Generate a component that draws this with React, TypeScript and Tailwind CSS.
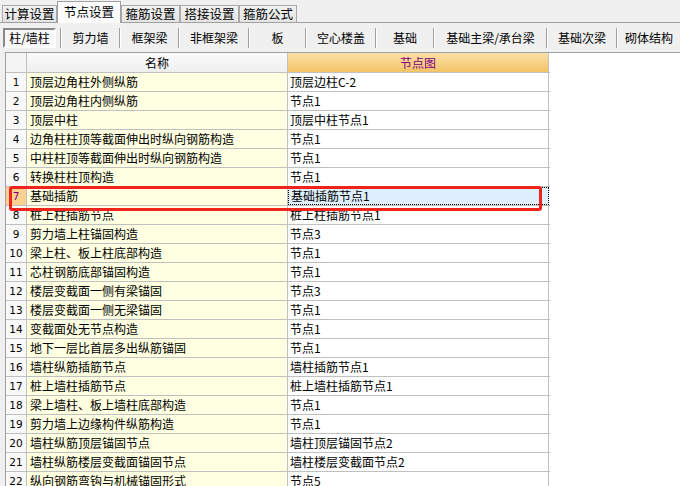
import React from "react";

const rows: [string, string][] = [
  ["顶层边角柱外侧纵筋", "顶层边柱C-2"],
  ["顶层边角柱内侧纵筋", "节点1"],
  ["顶层中柱", "顶层中柱节点1"],
  ["边角柱柱顶等截面伸出时纵向钢筋构造", "节点1"],
  ["中柱柱顶等截面伸出时纵向钢筋构造", "节点1"],
  ["转换柱柱顶构造", "节点1"],
  ["基础插筋", "基础插筋节点1"],
  ["桩上柱插筋节点", "桩上柱插筋节点1"],
  ["剪力墙上柱锚固构造", "节点3"],
  ["梁上柱、板上柱底部构造", "节点1"],
  ["芯柱钢筋底部锚固构造", "节点1"],
  ["楼层变截面一侧有梁锚固", "节点3"],
  ["楼层变截面一侧无梁锚固", "节点1"],
  ["变截面处无节点构造", "节点1"],
  ["地下一层比首层多出纵筋锚固", "节点1"],
  ["墙柱纵筋插筋节点", "墙柱插筋节点1"],
  ["桩上墙柱插筋节点", "桩上墙柱插筋节点1"],
  ["梁上墙柱、板上墙柱底部构造", "节点1"],
  ["剪力墙上边缘构件纵筋构造", "节点1"],
  ["墙柱纵筋顶层锚固节点", "墙柱顶层锚固节点2"],
  ["墙柱纵筋楼层变截面锚固节点", "墙柱楼层变截面节点2"],
  ["纵向钢筋弯钩与机械锚固形式", "节点5"],
];

const tabs = [
  { label: "计算设置", w: "w-[55px]" },
  { label: "节点设置", w: "w-[64px]", active: true },
  { label: "箍筋设置", w: "w-[59px]" },
  { label: "搭接设置", w: "w-[59px]" },
  { label: "箍筋公式", w: "w-[58px]" },
];

const buttons = [
  { label: "剪力墙", w: "w-[57px]" },
  { label: "框架梁", w: "w-[57px]" },
  { label: "非框架梁", w: "w-[68px]" },
  { label: "板", w: "w-[55px]" },
  { label: "空心楼盖", w: "w-[68px]" },
  { label: "基础", w: "w-[56px]" },
  { label: "基础主梁/承台梁", w: "w-[111px]" },
  { label: "基础次梁", w: "w-[68px]" },
  { label: "砌体结构", w: "w-[62px]" },
];

const Sep = () => (
  <div className="h-[20px] w-[2px] shrink-0 border-l border-r border-l-[#a0a0a0] border-r-white" />
);

export default function App() {
  return (
    <div className="relative h-[486px] w-[680px] overflow-hidden bg-[#f0f0f0] font-['Noto_Sans_CJK_SC',sans-serif] text-[12px] text-black">
      {/* top tabs */}
      <div className="flex h-[23px] items-end border-b border-[#a0a0a0] pl-[2px]">
        {tabs.map((t) =>
          t.active ? (
            <div
              key={t.label}
              className={`${t.w} relative -mb-px flex h-[22px] items-center justify-center border border-b-0 border-[#a0a0a0] bg-[#fcfcfc] text-[12.5px] leading-none`}
            >
              {t.label}
            </div>
          ) : (
            <div
              key={t.label}
              className={`${t.w} flex h-[17px] items-center justify-center border border-b-0 border-[#a9a9a9] bg-gradient-to-b from-[#f2f2f2] to-[#e4e4e4] text-[12.5px] leading-none`}
            >
              {t.label}
            </div>
          )
        )}
      </div>

      {/* toolbar */}
      <div className="flex h-[29px] items-center pl-[3px] pt-[1px]">
        <div className="flex h-[20px] w-[53px] items-center justify-center border-2 border-b-white border-l-[#8a8a8a] border-r-white border-t-[#8a8a8a] bg-[#f8f8f8] leading-none">
          柱/墙柱
        </div>
        <div className="w-[4px]" />
        {buttons.map((b) => (
          <React.Fragment key={b.label}>
            <Sep />
            <div className={`${b.w} flex h-[20px] shrink-0 items-center justify-center leading-none`}>
              {b.label}
            </div>
          </React.Fragment>
        ))}
      </div>

      {/* grid area */}
      <div className="ml-[5px] h-full border-l border-t border-[#a0a0a0] bg-white">
        <div className="w-[544px]">
          <div className="flex h-[20px] border-b border-[#c0c0c0]">
            <div className="w-[21px] shrink-0 border-r border-[#c0c0c0] bg-[#f4f4f4]" />
            <div className="flex w-[261px] shrink-0 items-center justify-center border-r border-[#c0c0c0] bg-gradient-to-b from-[#fbfbfb] to-[#efefef] leading-none">
              名称
            </div>
            <div className="flex w-[261px] shrink-0 items-center justify-center border-r border-[#c0c0c0] bg-gradient-to-b from-[#fbe0a6] to-[#f3c366] leading-none text-[#800080]">
              节点图
            </div>
          </div>
          {rows.map(([name, node], i) => {
            const sel = i === 6;
            return (
              <div key={i} className="flex h-[19px] border-b border-[#c0c0c0]">
                <div
                  className={`flex w-[21px] shrink-0 items-center justify-center border-r border-[#c0c0c0] font-['DejaVu_Sans',sans-serif] text-[10.5px] leading-none ${
                    sel ? "bg-[#fcd08e] text-[#800080]" : "bg-[#f9f9f9]"
                  }`}
                >
                  {i + 1}
                </div>
                <div className="flex w-[261px] shrink-0 items-center border-r border-[#c0c0c0] bg-[#ffffe1] pl-[3px] leading-none">
                  {name}
                </div>
                <div
                  className={`flex w-[261px] shrink-0 items-center border-r pl-[2px] leading-none ${
                    sel
                      ? "border border-dotted border-black bg-[#deeefc]"
                      : "border-[#c0c0c0] bg-white"
                  }`}
                >
                  {node}
                </div>
              </div>
            );
          })}
        </div>
      </div>

      {/* annotation */}
      <div className="absolute left-[9px] top-[186px] h-[25px] w-[533px] rounded-[3px] border-[3px] border-[#f0241c]" />
    </div>
  );
}
